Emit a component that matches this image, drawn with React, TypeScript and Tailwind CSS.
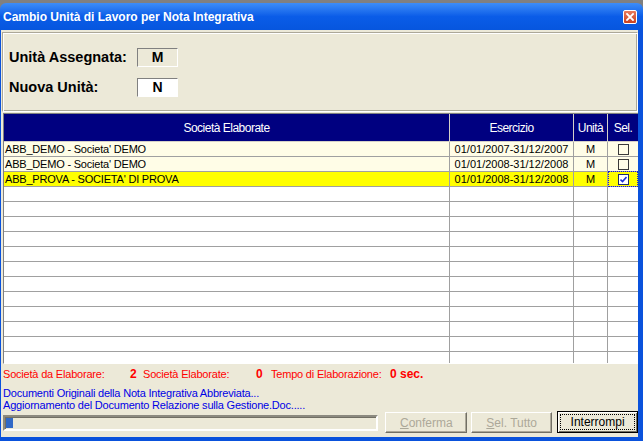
import React from "react";

const COLS = "grid grid-cols-[445px_123px_33px_30px] gap-x-px";

type Row = {
  societa: string;
  esercizio: string;
  unita: string;
  sel: boolean;
  tone: "pale" | "hi" | "none";
};

const rows: Row[] = [
  { societa: "ABB_DEMO - Societa' DEMO", esercizio: "01/01/2007-31/12/2007", unita: "M", sel: false, tone: "pale" },
  { societa: "ABB_DEMO - Societa' DEMO", esercizio: "01/01/2008-31/12/2008", unita: "M", sel: false, tone: "pale" },
  { societa: "ABB_PROVA - SOCIETA' DI PROVA", esercizio: "01/01/2008-31/12/2008", unita: "M", sel: true, tone: "hi" },
];

export default function App() {
  const empty = Array.from({ length: 13 });

  return (
    <div className="w-[643px] h-[441px] overflow-hidden bg-[#808080] pt-[3px] flex flex-col font-['Liberation_Sans',Arial,sans-serif] select-none">
      <TitleBar />

      <div className="flex-1 flex flex-col bg-[#ece9d8] border-l border-r-[5px] border-b-4 border-[#0a52dc]">
        {/* Unità panel */}
        <div className="mt-[2px] ml-px h-[80px] flex flex-col gap-[11px] pt-[15px] pl-[6px] border border-t-[#aca899] border-l-[#aca899] border-b-white border-r-white shadow-[inset_1px_1px_0_#fff,inset_-1px_-1px_0_#aca899]">
          <div className="flex items-center h-[19px]">
            <span className="w-[128px] text-[14.5px] font-bold text-black">Unità Assegnata:</span>
            <UnitBox value="M" />
          </div>
          <div className="flex items-center h-[19px]">
            <span className="w-[128px] text-[14.5px] font-bold text-black">Nuova Unità:</span>
            <UnitBox value="N" white />
          </div>
        </div>

        {/* Grid */}
        <div className="ml-[2px] mt-px h-[251px] overflow-hidden border-t border-l border-b border-t-[#808080] border-l-[#808080] border-b-white bg-white">
          <div className={`${COLS} bg-[#d4d0c8] pb-px`}>
            <HeaderCell>Società Elaborate</HeaderCell>
            <HeaderCell>Esercizio</HeaderCell>
            <HeaderCell>Unità</HeaderCell>
            <HeaderCell>Sel.</HeaderCell>
          </div>

          {rows.map((r, i) => {
            const bg = r.tone === "hi" ? "bg-[#ffff00]" : r.tone === "pale" ? "bg-[#fffde7]" : "bg-white";
            return (
              <div key={i} className={`${COLS} bg-[#a0a0a0] pb-px`}>
                <div className={`${bg} h-[14px] pl-px text-[11px] leading-[14px] tracking-[-0.2px] text-black whitespace-nowrap`}>{r.societa}</div>
                <div className={`${bg} h-[14px] text-center text-[11px] leading-[14px] text-black`}>{r.esercizio}</div>
                <div className={`${bg} h-[14px] text-center text-[11px] leading-[14px] text-black`}>{r.unita}</div>
                <div className={`${bg} h-[14px] flex items-center justify-center relative`}>
                  {r.sel && (
                    <span className="absolute inset-x-0 -top-px -bottom-px outline-1 outline-dotted outline-[#1a1ad0] -outline-offset-1" />
                  )}
                  <CheckBox checked={r.sel} />
                </div>
              </div>
            );
          })}

          {empty.map((_, i) => (
            <div key={`e${i}`} className={`${COLS} bg-[#a0a0a0] pb-px`}>
              <div className="bg-white h-[14px]" />
              <div className="bg-white h-[14px]" />
              <div className="bg-white h-[14px]" />
              <div className="bg-white h-[14px]" />
            </div>
          ))}
        </div>

        {/* Stats */}
        <div className="mt-[3px] ml-[2px] flex items-center h-[14px] text-[#ff0000] leading-[14px] whitespace-nowrap">
          <span className="w-[127px] text-[11px] tracking-[-0.2px]">Società da Elaborare:</span>
          <span className="w-[13px] text-[12px] font-bold">2</span>
          <span className="w-[113px] text-[11px] tracking-[-0.2px]">Società Elaborate:</span>
          <span className="w-[15px] text-[12px] font-bold">0</span>
          <span className="w-[119px] text-[11px] tracking-[-0.2px]">Tempo di Elaborazione:</span>
          <span className="text-[12px] font-bold">0 sec.</span>
        </div>

        {/* Log */}
        <div className="mt-[6px] ml-[2px] flex flex-col text-[11px] leading-[12px] tracking-[-0.2px] text-[#0000e6] whitespace-nowrap">
          <span>Documenti Originali della Nota Integrativa Abbreviata...</span>
          <span>Aggiornamento del Documento Relazione sulla Gestione.Doc.....</span>
        </div>

        {/* Progress + buttons */}
        <div className="flex items-start h-[22px]">
          <div className="ml-[2px] mt-[4px] w-[376px] h-[16px] border-2 border-t-[#8c8a80] border-l-[#8c8a80] border-b-white border-r-white shadow-[inset_1px_1px_0_#716f64] px-[1px] pt-[1px] bg-[#ece9d8]">
            <div className="w-[7px] h-[10px] bg-[#3169c6]" />
          </div>
          <DisabledButton className="ml-[7px] w-[82px]" accel="C" rest="onferma" />
          <DisabledButton className="ml-[4px] w-[81px]" accel="S" rest="el. Tutto" />
          <button className="ml-[5px] w-[81px] h-[22px] border border-black bg-[#ece9d8] shadow-[inset_1px_1px_0_#fff,inset_-1px_-1px_0_#716f64] p-[3px]">
            <span className="flex h-full w-full items-center justify-center outline-1 outline-dotted outline-black text-[12px] text-black">
              Interrompi
            </span>
          </button>
        </div>
      </div>
    </div>
  );
}

function TitleBar() {
  return (
    <div className="h-[27px] shrink-0 flex items-center justify-between rounded-t-[6px] bg-gradient-to-b from-[#3d8df7] via-[#0a5ce8] to-[#0656de] pl-[3px] pr-[6px]">
      <span className="text-[12px] font-bold text-white whitespace-nowrap">
        Cambio Unità di Lavoro per Nota Integrativa
      </span>
      <span className="mt-px w-[14px] h-[14px] rounded-[2px] border border-white bg-gradient-to-b from-[#e87a5c] to-[#c9401c] flex items-center justify-center">
        <svg width="8" height="8" viewBox="0 0 8 8" aria-hidden="true">
          <path d="M1 1 L7 7 M7 1 L1 7" stroke="#fff" strokeWidth="1.8" strokeLinecap="square" />
        </svg>
      </span>
    </div>
  );
}

function UnitBox({ value, white }: { value: string; white?: boolean }) {
  return (
    <span
      className={`w-[41px] h-[19px] flex items-center justify-center text-[14px] font-bold text-black border border-t-[#808080] border-l-[#808080] border-b-white border-r-white ${
        white ? "bg-white" : "bg-[#ece9d8]"
      }`}
    >
      {value}
    </span>
  );
}

function HeaderCell({ children }: { children: React.ReactNode }) {
  return (
    <div className="h-[27px] bg-[#000080] text-white text-[12px] tracking-[-0.5px] flex items-center justify-center whitespace-nowrap">
      {children}
    </div>
  );
}

function CheckBox({ checked }: { checked: boolean }) {
  return (
    <span
      className={`relative w-[11px] h-[11px] border flex items-center justify-center ${
        checked ? "border-[#1c2a6e] bg-white" : "border-[#3a3a3a]"
      }`}
    >
      {checked && (
        <svg width="7" height="7" viewBox="0 0 7 7" aria-hidden="true">
          <path d="M0.5 3.5 L2.5 5.5 L6.5 1" stroke="#1a2fd8" strokeWidth="1.6" fill="none" />
        </svg>
      )}
    </span>
  );
}

function DisabledButton({ className, accel, rest }: { className: string; accel: string; rest: string }) {
  return (
    <button
      disabled
      className={`${className} mt-px h-[21px] border border-t-white border-l-white border-b-[#716f64] border-r-[#716f64] shadow-[inset_-1px_-1px_0_#aca899] bg-[#ece9d8] text-[12px] text-[#aca899] flex items-center justify-center`}
    >
      <span>
        <span className="underline">{accel}</span>
        {rest}
      </span>
    </button>
  );
}
